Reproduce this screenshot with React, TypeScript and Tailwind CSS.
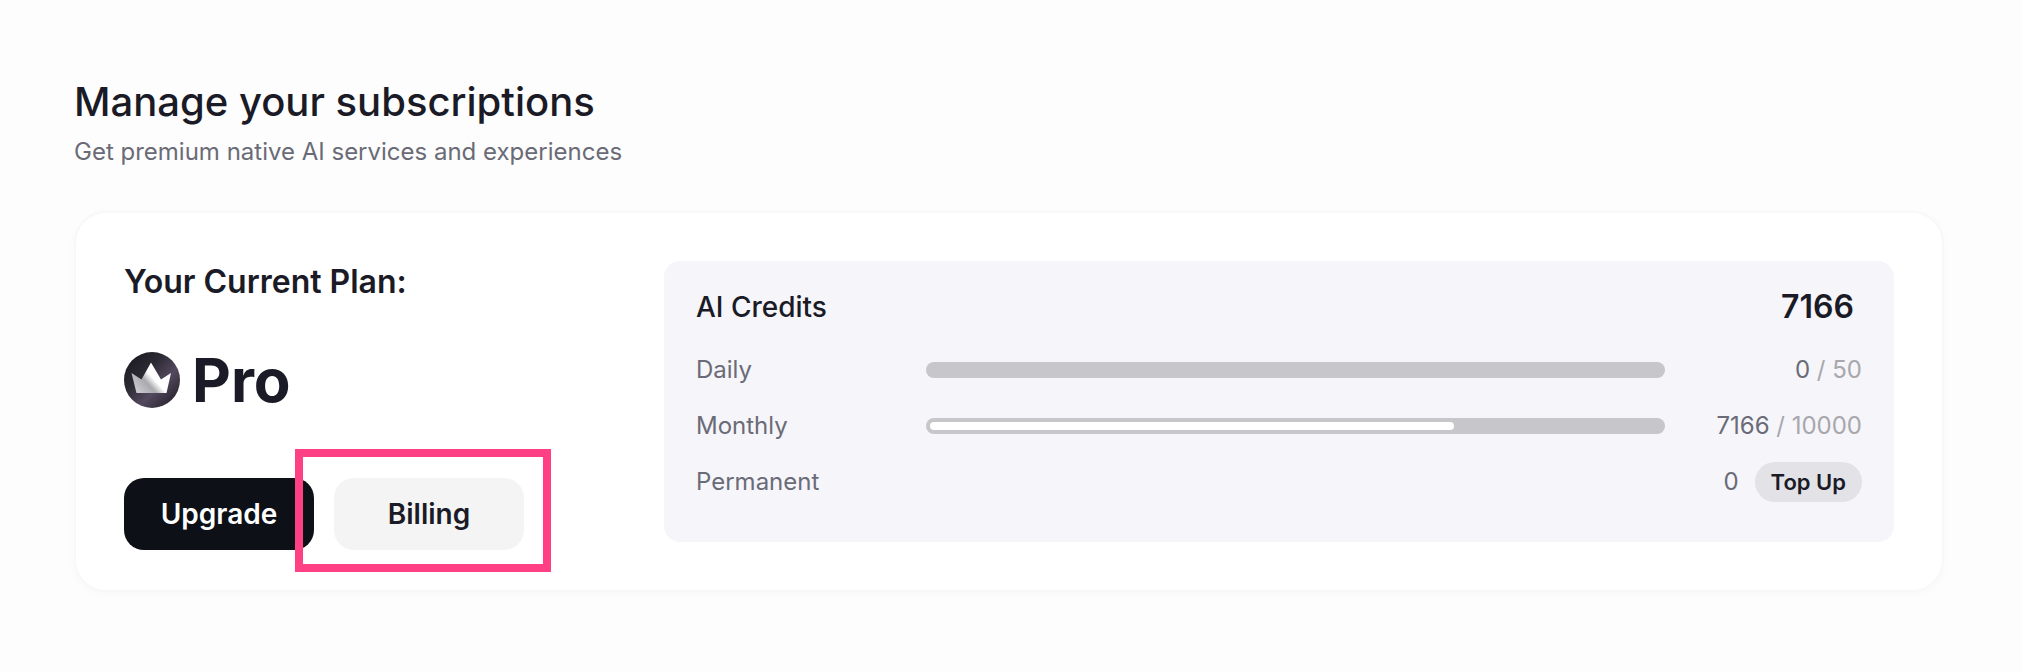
const font = { fontFamily: 'Inter, "Liberation Sans", sans-serif' }

function ProBadge() {
  return (
    <svg width="56" height="56" viewBox="0 0 56 56" className="shrink-0">
      <defs>
        <linearGradient id="badge-bg" x1="0" y1="0" x2="1" y2="1">
          <stop offset="0" stopColor="#17171d" />
          <stop offset="0.35" stopColor="#2a2831" />
          <stop offset="0.62" stopColor="#54495e" />
          <stop offset="1" stopColor="#17161c" />
        </linearGradient>
        <linearGradient id="badge-crown" x1="0" y1="1" x2="1" y2="0.3">
          <stop offset="0" stopColor="#d9d9dc" />
          <stop offset="0.42" stopColor="#a9a9ae" />
          <stop offset="0.6" stopColor="#ffffff" />
          <stop offset="1" stopColor="#ffffff" />
        </linearGradient>
      </defs>
      <circle cx="28" cy="28" r="28" fill="url(#badge-bg)" />
      <path
        d="M7.5 21 L17.5 27.5 L27 10.5 L37 27.5 L47 21 L42.5 41 L12.5 41 Z"
        fill="url(#badge-crown)"
      />
    </svg>
  )
}

function CreditRow({ label, used, total, percent }: { label: string; used: string; total: string; percent: number }) {
  return (
    <div className="flex items-center h-10">
      <span className="w-[230px] text-[24px] text-[#6a6b76]">{label}</span>
      <div className="flex-1 h-4 rounded-full bg-[#c6c6cb] p-1">
        <div className="h-2 rounded-full bg-white" style={{ width: `${percent}%` }} />
      </div>
      <span className="w-[197px] text-right text-[24px] text-[#6a6b76]">
        {used} <span className="text-[#a7a7ad]">/ {total}</span>
      </span>
    </div>
  )
}

export default function App() {
  return (
    <div className="relative w-[2022px] h-[672px] bg-[#fdfdfd] pl-[74px] pr-[78px] pt-[74px]" style={font}>
      <h1 className="text-[40px] leading-[56px] font-medium text-[#1a1b26]">Manage your subscriptions</h1>
      <p className="mt-[6px] text-[24px] leading-8 text-[#6a6b76]">Get premium native AI services and experiences</p>

      <div className="mt-[43px] flex items-start rounded-[32px] border-2 border-[#f8f8f8] bg-white pl-[48px] pr-[48px] pt-[48px] pb-[40px] shadow-[0_2px_8px_rgba(0,0,0,0.025)]">
        {/* Plan */}
        <div className="w-[540px] h-[289px] shrink-0 flex flex-col">
          <h2 className="mt-[3px] text-[32px] leading-9 font-semibold text-[#1a1b26]">Your Current Plan:</h2>
          <div className="mt-[52px] flex items-center gap-3 h-14">
            <ProBadge />
            <span className="text-[60px] leading-none font-bold text-[#1a1b26]">Pro</span>
          </div>
          <div className="mt-[70px] flex gap-5">
            <button className="w-[190px] h-[72px] rounded-[20px] bg-[#0d1017] text-[28px] font-semibold text-white">
              Upgrade
            </button>
            <button className="w-[190px] h-[72px] rounded-[20px] bg-[#f4f4f5] text-[28px] font-semibold text-[#1a1b26]">
              Billing
            </button>
          </div>
        </div>

        {/* Credits */}
        <div className="flex-1 h-[281px] rounded-2xl bg-[#f5f5fa] pl-8 pr-8 pt-[28px]">
          <div className="flex items-center justify-between h-9 mb-[25px]">
            <span className="text-[28px] font-medium text-[#1a1b26]">AI Credits</span>
            <span className="pr-2 text-[32px] font-semibold text-[#1a1b26]">7166</span>
          </div>
          <div className="flex flex-col gap-4">
            <CreditRow label="Daily" used="0" total="50" percent={0} />
            <CreditRow label="Monthly" used="7166" total="10000" percent={71.66} />
            <div className="flex items-center justify-between h-10">
              <span className="text-[24px] text-[#6a6b76]">Permanent</span>
              <div className="flex items-center gap-4">
                <span className="text-[24px] text-[#6a6b76]">0</span>
                <button className="h-10 px-4 rounded-full bg-[#e3e2e7] text-[22px] font-semibold text-[#1a1b26]">Top Up</button>
              </div>
            </div>
          </div>
        </div>
      </div>

      {/* Highlight annotation */}
      <div className="absolute left-[295px] top-[449px] w-[256px] h-[123px] border-8 border-[#ff4085]" />
    </div>
  )
}
